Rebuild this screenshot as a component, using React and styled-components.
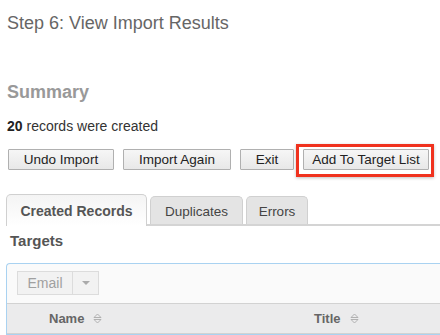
import React from "react";
import styled, { createGlobalStyle } from "styled-components";

const Global = createGlobalStyle`
  html, body {
    margin: 0;
    padding: 0;
    background: #fff;
    font-family: "Liberation Sans", Arial, sans-serif;
    overflow: hidden;
  }
`;

const Page = styled.div`
  width: 440px;
  height: 335px;
  overflow: hidden;
  padding: 0 0 0 6px;
  box-sizing: border-box;
`;

const StepTitle = styled.h2`
  margin: 0;
  padding: 12px 0 0 1px;
  font-size: 18px;
  line-height: 22px;
  font-weight: normal;
  color: #666;
`;

const Summary = styled.h3`
  margin: 47px 0 0 1px;
  font-size: 18px;
  line-height: 22px;
  font-weight: bold;
  color: #999;
`;

const Count = styled.p`
  margin: 15px 0 0 1px;
  font-size: 14px;
  line-height: 17px;
  color: #333;

  strong {
    color: #222;
  }
`;

const ButtonRow = styled.div`
  display: flex;
  align-items: center;
  gap: 9px;
  margin-top: 14px;
  padding-left: 2px;
`;

const Highlight = styled.div`
  position: relative;

  &::after {
    content: "";
    position: absolute;
    left: -7px;
    right: -5px;
    top: -5px;
    bottom: -7px;
    border: 3px solid #f0321e;
    box-shadow: 0 1px 3px rgba(0, 0, 0, 0.25);
    pointer-events: none;
  }
`;

const Button = styled.button`
  height: 21px;
  width: ${(p) => p.w}px;
  padding: 0;
  font-family: "Liberation Sans", Arial, sans-serif;
  font-size: 13.5px;
  color: #222;
  background: linear-gradient(#f6f6f6, #e8e8e8);
  border: 1px solid #b0b0b0;
  border-radius: 1px;
  box-sizing: border-box;
`;

const Tabs = styled.div`
  display: flex;
  align-items: flex-end;
  gap: 3px;
  margin-top: 23px;
  border-bottom: 2px solid #d4d4d4;
  margin-right: -6px;
  height: 31px;
`;

const Tab = styled.div`
  width: ${(p) => p.w}px;
  height: ${(p) => (p.active ? 32 : 28)}px;
  margin-bottom: ${(p) => (p.active ? -2 : 0)}px;
  box-sizing: border-box;
  display: flex;
  align-items: center;
  justify-content: center;
  font-size: ${(p) => (p.active ? 14 : 13.5)}px;
  font-weight: ${(p) => (p.active ? "bold" : "normal")};
  color: ${(p) => (p.active ? "#555" : "#444")};
  padding-top: ${(p) => (p.active ? 0 : 2)}px;
  border: 1px solid #d0d0d0;
  border-bottom: none;
  border-radius: 5px 5px 0 0;
  background: ${(p) =>
    p.active ? "linear-gradient(#f4f4f4, #ffffff)" : "#e4e4e4"};
`;

const SectionTitle = styled.h4`
  margin: 6px 0 0 4px;
  font-size: 15px;
  line-height: 18px;
  font-weight: bold;
  color: #555;
`;

const Panel = styled.div`
  margin-top: 13px;
  margin-right: -10px;
  border: 1px solid #a9d2f1;
  border-right: none;
  border-radius: 4px 0 0 0;
  background: #fafafa;
`;

const Toolbar = styled.div`
  padding: 7px 10px 8px;
  display: flex;
`;

const SplitButton = styled.div`
  display: flex;
  height: 24px;
  border: 1px solid #dcdcdc;
  background: #f2f2f2;
  box-sizing: border-box;
  font-size: 14px;
  color: #a0a0a0;
`;

const SplitLabel = styled.span`
  width: 54px;
  display: flex;
  align-items: center;
  justify-content: center;
  border-right: 1px solid #dcdcdc;
`;

const SplitCaret = styled.span`
  width: 25px;
  display: flex;
  align-items: center;
  justify-content: center;

  &::before {
    content: "";
    border-left: 4px solid transparent;
    border-right: 4px solid transparent;
    border-top: 4px solid #aaa;
  }
`;

const HeaderRow = styled.div`
  display: grid;
  grid-template-columns: 265px 1fr;
  height: 29px;
  align-items: center;
  border-top: 1px solid #d2d2d2;
  border-bottom: 1px solid #d2d2d2;
  background: #ebebec;
  padding-left: 42px;
`;

const HeaderCell = styled.div`
  display: flex;
  align-items: center;
  gap: 9px;
  font-size: 13px;
  font-weight: bold;
  color: #666;
`;

const SortIcon = () => (
  <svg width="9" height="11" viewBox="0 0 9 11">
    <path d="M1 4.5 L4.5 1 L8 4.5 Z" fill="none" stroke="#aaa" strokeWidth="0.9" />
    <path d="M1 6.5 L4.5 10 L8 6.5 Z" fill="none" stroke="#aaa" strokeWidth="0.9" />
  </svg>
);

export default function App() {
  return (
    <>
      <Global />
      <Page>
        <StepTitle>Step 6: View Import Results</StepTitle>
        <Summary>Summary</Summary>
        <Count>
          <strong>20</strong> records were created
        </Count>
        <ButtonRow>
          <Button w={106}>Undo Import</Button>
          <Button w={108}>Import Again</Button>
          <Button w={54}>Exit</Button>
          <Highlight>
            <Button w={126}>Add To Target List</Button>
          </Highlight>
        </ButtonRow>
        <Tabs>
          <Tab active w={141}>Created Records</Tab>
          <Tab w={93}>Duplicates</Tab>
          <Tab w={62}>Errors</Tab>
        </Tabs>
        <SectionTitle>Targets</SectionTitle>
        <Panel>
          <Toolbar>
            <SplitButton>
              <SplitLabel>Email</SplitLabel>
              <SplitCaret />
            </SplitButton>
          </Toolbar>
          <HeaderRow>
            <HeaderCell>
              Name <SortIcon />
            </HeaderCell>
            <HeaderCell>
              Title <SortIcon />
            </HeaderCell>
          </HeaderRow>
        </Panel>
      </Page>
    </>
  );
}
